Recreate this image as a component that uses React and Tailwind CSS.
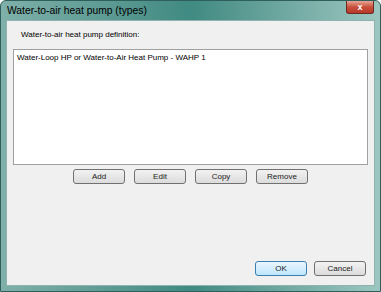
import React from 'react';

const font = { fontFamily: '"Liberation Sans", Arial, sans-serif' };

function Btn({ children, primary }) {
    return (
        <button
            className={
                primary
                    ? 'w-[52px] h-[15px] rounded-[3px] border border-[#3c7fb1] bg-gradient-to-b from-[#eaf6fd] to-[#bee6fd] text-[8px] text-[#1a1a1a] leading-none'
                    : 'w-[52px] h-[15px] rounded-[3px] border border-[#707070] bg-gradient-to-b from-[#f2f2f2] to-[#dcdcdc] text-[8px] text-[#1a1a1a] leading-none'
            }
        >
            {children}
        </button>
    );
}

export default function App() {
    return (
        <div className="w-[381px] h-[292px] flex flex-col rounded-t-[6px] border border-[#2f5f5a] bg-gradient-to-r from-[#7fb0aa] via-[#3f8a82] to-[#9cc7c1]" style={font}>
            <div className="h-[19px] flex items-start justify-between pl-[6px] pr-[6px]">
                <span className="mt-[5px] text-[10.3px] leading-none text-black">Water-to-air heat pump (types)</span>
                <div className="w-[28px] h-[13px] rounded-b-[3px] border border-t-0 border-[#6b2a22] bg-gradient-to-b from-[#e8a496] via-[#c8503c] to-[#b8382a] flex items-center justify-center">
                    <span className="text-white text-[9px] font-bold leading-none">x</span>
                </div>
            </div>
            <div className="flex-1 mx-[5px] mb-[5px] border border-[#8fb3af] bg-[#f0f0f0] flex flex-col">
                <div className="pl-[14px] pt-[10px] text-[8px] leading-none text-black">Water-to-air heat pump definition:</div>
                <div className="mx-[6px] mt-[10px] h-[116px] border border-[#a0a0a0] bg-white px-[3px] pt-[4px]">
                    <div className="text-[8px] leading-none text-black">Water-Loop HP or Water-to-Air Heat Pump - WAHP 1</div>
                </div>
                <div className="mt-[4px] flex justify-center gap-[9px]">
                    <Btn>Add</Btn>
                    <Btn>Edit</Btn>
                    <Btn>Copy</Btn>
                    <Btn>Remove</Btn>
                </div>
                <div className="mt-auto mb-[9px] pr-[8px] flex justify-end gap-[7px]">
                    <Btn primary>OK</Btn>
                    <Btn>Cancel</Btn>
                </div>
            </div>
        </div>
    );
}
